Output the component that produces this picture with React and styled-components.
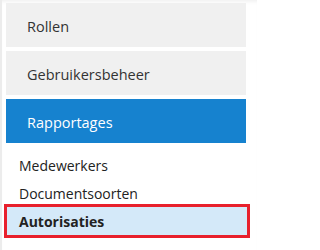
import React from "react";
import styled, { createGlobalStyle } from "styled-components";

const GlobalStyle = createGlobalStyle`
  html, body {
    margin: 0;
    padding: 0;
    background: #fff;
  }
  body {
    font-family: "Open Sans", "Liberation Sans", sans-serif;
  }
`;

const Sidebar = styled.nav`
  width: 257px;
  height: 250px;
  box-sizing: border-box;
  border-left: 2px solid #ececec;
  padding: 3px 0 0 4px;
  background: #fff;
  box-shadow: inset 0 4px 4px -3px rgba(0, 0, 0, 0.08);
  overflow: hidden;
`;

const MenuItem = styled.a`
  display: block;
  width: 240px;
  height: 44px;
  box-sizing: border-box;
  margin-bottom: 4px;
  padding-left: 21px;
  line-height: 47px;
  font-size: 14.5px;
  text-decoration: none;
  color: ${(p) => (p.$active ? "#fff" : "#333")};
  background: ${(p) => (p.$active ? "#1682cf" : "#f0f0f0")};
  cursor: pointer;
`;

const SubMenu = styled.ul`
  list-style: none;
  margin: 0;
  padding: 4px 0 0 1px;
`;

const SubItem = styled.li`
  width: 240px;
  height: 28px;
  box-sizing: border-box;
  padding-left: 12px;
  line-height: 29px;
  font-size: 14px;
  font-weight: ${(p) => (p.$selected ? 700 : 400)};
  color: #222;
  background: ${(p) => (p.$selected ? "#d4e9f9" : "transparent")};
  outline: ${(p) => (p.$selected ? "3px solid #e8202c" : "none")};
  cursor: pointer;
`;

export default function App() {
  return (
    <>
      <GlobalStyle />
      <Sidebar>
        <MenuItem>Rollen</MenuItem>
        <MenuItem>Gebruikersbeheer</MenuItem>
        <MenuItem $active>Rapportages</MenuItem>
        <SubMenu>
          <SubItem>Medewerkers</SubItem>
          <SubItem>Documentsoorten</SubItem>
          <SubItem $selected>Autorisaties</SubItem>
        </SubMenu>
      </Sidebar>
    </>
  );
}
